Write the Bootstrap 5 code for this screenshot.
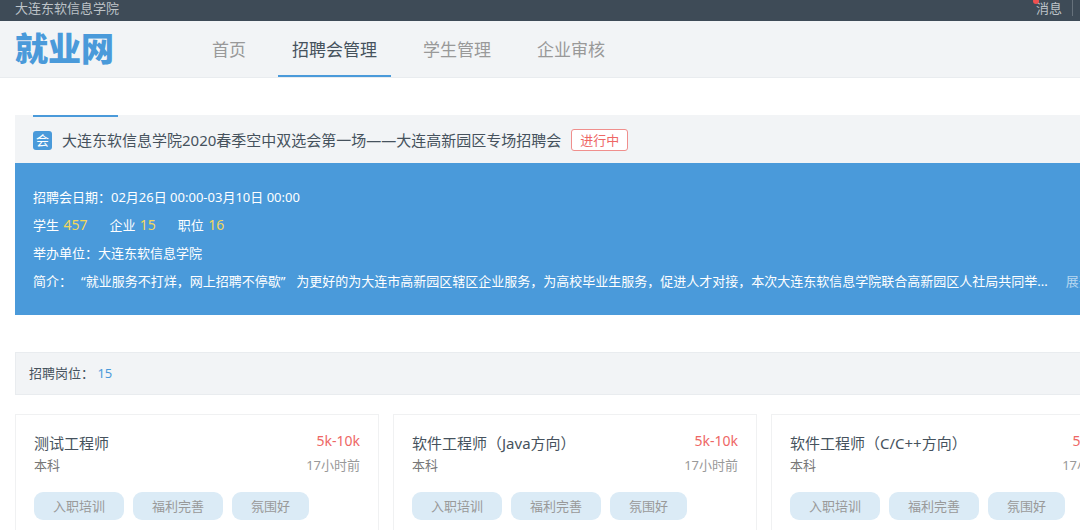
<!DOCTYPE html>
<html lang="zh-CN">
<head>
<meta charset="utf-8">
<meta name="viewport" content="width=device-width, initial-scale=1">
<title>就业网</title>
<link href="https://cdn.jsdelivr.net/npm/bootstrap@5.3.0/dist/css/bootstrap.min.css" rel="stylesheet">
<style>
  :root { --brand: #4a9ada; --ink: #46525d; --pale: #f2f4f6; --line: #e9ecef; --hot: #ee6765; }
  body { font-family: "Noto Sans", "Noto Sans CJK SC", sans-serif; font-size: 13px; line-height: 20px; color: var(--ink); overflow-x: hidden; }
  a { color: inherit; text-decoration: none; }
  /* desktop layout: three columns never get narrower than this */
  .site { min-width: 1150px; }
  .gutter { padding-left: 15px; padding-right: 15px; }
  .topbar { background: #3e4b57; color: #bdc3c8; line-height: 16px; padding-bottom: 5px; }
  .topbar-msg { padding-right: 10px; margin-right: 62px; border-right: 1px solid #66717b; }
  .msg-dot { position: absolute; left: -3px; top: -2px; width: 6px; height: 6px; border-radius: 50%; background: #f05050; }
  .mainbar { background: var(--pale); border-bottom: 1px solid var(--line); gap: 84px; }
  .logo { font-size: 33px; line-height: 56px; font-weight: 900; color: var(--brand); }
  .menu { gap: 18px; font-size: 17px; }
  .menu .nav-link { color: #999; padding: 4px 14px 0; line-height: 50px; border-bottom: 2px solid transparent; }
  .menu .nav-link.active { color: var(--ink); border-color: var(--brand); }
  .fair { margin-top: 37px; }
  .fair-head { background: var(--pale); padding: 0 18px; }
  .fair-head::before { content: ""; display: block; width: 85px; height: 2px; background: var(--brand); }
  .fair-title { font-size: 15px; line-height: 24px; font-weight: 400; }
  .fair-row { height: 46px; gap: 10px; }
  .fair-icon { width: 19px; height: 19px; line-height: 19px; border-radius: 3px; background: var(--brand); color: #fff; text-align: center; }
  .state { border: 1px solid #f08f8d; border-radius: 3px; background: #fff; color: var(--hot); padding: 0 8px; line-height: 20px; }
  .fair-info { background: var(--brand); color: #fff; padding: 20px 18px; line-height: 28px; }
  .counts b { font-weight: 400; font-size: 14px; color: #f3d75c; margin-left: 1px; }
  .counts { gap: 22px; }
  .intro-label { margin-right: 9px; }
  .quote { margin-right: 11px; }
  .unfold { color: #b7d7f0; margin-left: 18px; }
  .jobs-bar { margin-top: 37px; background: var(--pale); border: 1px solid var(--line); padding: 10px 13px 11px; }
  .jobs-bar span { color: var(--brand); }
  .jobs { display: grid; grid-template-columns: repeat(3, 1fr); gap: 14px; margin-top: 19px; margin-bottom: 19px; }
  .job { border: 1px solid #f0f1f2; padding: 16px 18px; }
  .job h2 { font-size: 15px; line-height: 24px; margin: 0; font-weight: 400; }
  .pay { color: var(--hot); font-size: 14px; }
  .level { color: #777; }
  .when { color: #999; }
  .tags { gap: 9px; margin-top: 17px; }
  .tags li { background: #dbebf6; color: #999; border-radius: 9px; padding: 4px 19px; }
</style>
<script src="https://cdn.jsdelivr.net/npm/bootstrap@5.3.0/dist/js/bootstrap.bundle.min.js"></script>
</head>
<body>
<div class="site">
  <div class="topbar gutter d-flex justify-content-between">
    <span>大连东软信息学院</span>
    <div class="topbar-msg"><a href="#" class="position-relative d-block">消息<i class="msg-dot"></i></a></div>
  </div>
  <header class="mainbar gutter d-flex">
    <a href="#" class="logo">就业网</a>
    <nav class="nav menu">
      <a class="nav-link" href="#">首页</a>
      <a class="nav-link active" aria-current="page" href="#">招聘会管理</a>
      <a class="nav-link" href="#">学生管理</a>
      <a class="nav-link" href="#">企业审核</a>
    </nav>
  </header>
  <main class="gutter">
    <section class="fair">
      <div class="fair-head">
        <div class="fair-row d-flex align-items-center">
          <span class="fair-icon">会</span>
          <h1 class="fair-title m-0">大连东软信息学院2020春季空中双选会第一场——大连高新园区专场招聘会</h1>
          <span class="state">进行中</span>
        </div>
      </div>
      <div class="fair-info">
        <div>招聘会日期：02月26日 00:00-03月10日 00:00</div>
        <div class="d-flex counts"><span>学生 <b>457</b></span><span>企业 <b>15</b></span><span>职位 <b>16</b></span></div>
        <div>举办单位：大连东软信息学院</div>
        <div class="d-flex text-nowrap">
          <span class="intro-label">简介：</span>
          <span><span class="quote">“就业服务不打烊，网上招聘不停歇”</span>为更好的为大连市高新园区辖区企业服务，为高校毕业生服务，促进人才对接，本次大连东软信息学院联合高新园区人社局共同举...</span>
          <a href="#" class="unfold">展开</a>
        </div>
      </div>
    </section>
    <div class="jobs-bar">招聘岗位： <span>15</span></div>
    <section class="jobs">
      <article class="job">
        <div class="d-flex justify-content-between"><h2>测试工程师</h2><span class="pay">5k-10k</span></div>
        <div class="d-flex justify-content-between"><span class="level">本科</span><span class="when">17小时前</span></div>
        <ul class="tags d-flex list-unstyled mb-0"><li>入职培训</li><li>福利完善</li><li>氛围好</li></ul>
      </article>
      <article class="job">
        <div class="d-flex justify-content-between"><h2>软件工程师（Java方向）</h2><span class="pay">5k-10k</span></div>
        <div class="d-flex justify-content-between"><span class="level">本科</span><span class="when">17小时前</span></div>
        <ul class="tags d-flex list-unstyled mb-0"><li>入职培训</li><li>福利完善</li><li>氛围好</li></ul>
      </article>
      <article class="job">
        <div class="d-flex justify-content-between"><h2>软件工程师（C/C++方向）</h2><span class="pay">5k-10k</span></div>
        <div class="d-flex justify-content-between"><span class="level">本科</span><span class="when">17小时前</span></div>
        <ul class="tags d-flex list-unstyled mb-0"><li>入职培训</li><li>福利完善</li><li>氛围好</li></ul>
      </article>
    </section>
  </main>
</div>
</body>
</html>
